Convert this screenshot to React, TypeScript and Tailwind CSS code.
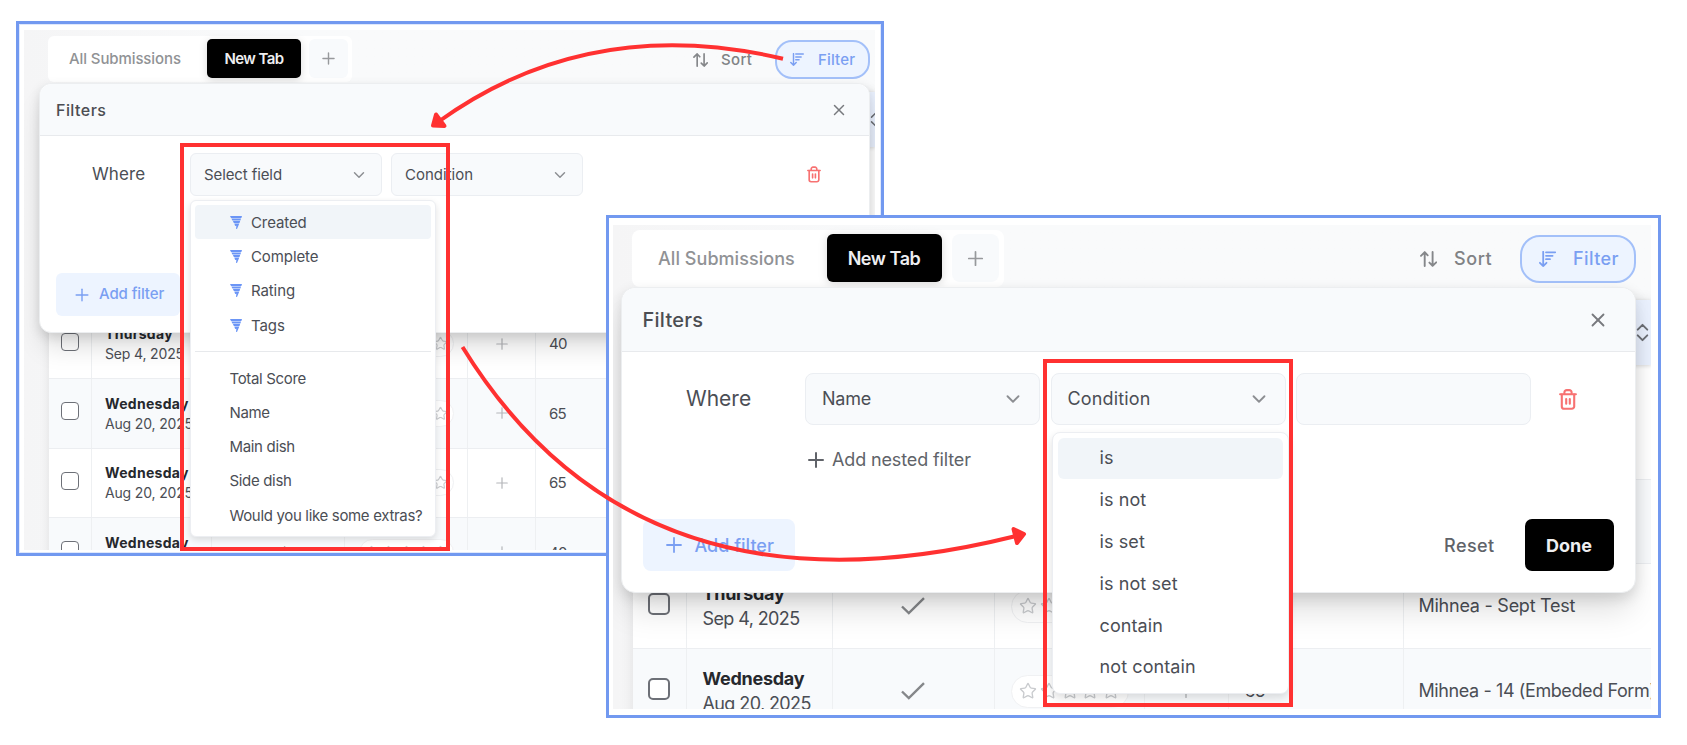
import { Check, ChevronDown, ChevronsUpDown, Plus, Star, X } from "lucide-react"

const fields = ["Created", "Complete", "Rating", "Tags"]
const questions = ["Total Score", "Name", "Main dish", "Side dish", "Would you like some extras?"]
const conditions = ["is", "is not", "is set", "is not set", "contain", "not contain"]

const smallRows = [
  { day: "Thursday", date: "Sep 4, 2025", score: "40" },
  { day: "Wednesday", date: "Aug 20, 2025", score: "65" },
  { day: "Wednesday", date: "Aug 20, 2025", score: "65" },
  { day: "Wednesday", date: "Aug 20, 2025", score: "40" },
]

const largeRows = [
  { day: "Thursday", date: "Sep 4, 2025", score: "40", form: "Mihnea - Sept Test" },
  { day: "Wednesday", date: "Aug 20, 2025", score: "65", form: "Mihnea - 14 (Embeded Form)" },
]

function SortIcon({ className }: { className: string }) {
  return (
    <svg viewBox="0 0 17 16" fill="none" stroke="currentColor" strokeWidth="1.9" strokeLinecap="round" strokeLinejoin="round" className={className}>
      <path d="M4.7 15V1.2M1 4.8l3.7-3.7 3 3.2" />
      <path d="M12.6 1v13.8M9.4 11.6l3.2 3.3 3.6-3.6" />
    </svg>
  )
}

function FilterIcon({ className }: { className: string }) {
  return (
    <svg viewBox="0 0 17 16" fill="none" stroke="currentColor" strokeWidth="1.8" strokeLinecap="round" strokeLinejoin="round" className={className}>
      <path d="M4.2.8v14.2M.9 11.8l3.3 3.3 3.3-3.3" />
      <path d="M7 1.3h9.2M7 4.8h6.6M7 8.2h4" />
    </svg>
  )
}

function TrashIcon({ className }: { className: string }) {
  return (
    <svg viewBox="0 0 18 21" fill="none" stroke="currentColor" strokeWidth="2.1" strokeLinecap="round" strokeLinejoin="round" className={className}>
      <path d="M1.1 5.3h15.8M5.4 5V3.4A2.3 2.3 0 0 1 7.7 1.1h2.6a2.3 2.3 0 0 1 2.3 2.3V5" />
      <path d="M2.8 5.6v11.8a2.4 2.4 0 0 0 2.4 2.4h7.6a2.4 2.4 0 0 0 2.4-2.4V5.6" />
      <path d="M7.2 10v4.800M10.800 10v4.800" />
    </svg>
  )
}

function FieldIcon() {
  return (
    <svg viewBox="0 0 12 13" className="h-[13px] w-3 text-[#6b95f6]" fill="currentColor">
      <path d="M0 0h12l-.6 1.9H1z" />
      <path d="M1.400 2.500h9.600l-.6 1.900H2.400z" />
      <path d="M2.900 5h7.200l-.6 1.900H3.800z" />
      <path d="M4.300 7.500h5L7 13l-1-.3.4-2.900-1.300.1z" />
    </svg>
  )
}

function Stars({ large }: { large?: boolean }) {
  return (
    <div
      className={
        large
          ? "flex h-[33px] w-[118px] items-center justify-center gap-[2.8px] rounded-full border border-[#f0f1f3] bg-white"
          : "flex h-[27px] w-[95px] items-center justify-center gap-[2.3px] rounded-full border border-[#f0f1f3] bg-white"
      }
    >
      {[1, 2, 3, 4, 5].map((n) => (
        <Star key={n} className={large ? "size-[18px] text-[#c9cbce]" : "size-[15px] text-[#c9cbce]"} strokeWidth={1.8} />
      ))}
    </div>
  )
}

function SmallWindow() {
  return (
    <div className="absolute left-4 top-[21px] h-[535px] w-[868px] border-[3px] border-[#7299f0] bg-white pl-[5px] pt-1.5 shadow-[inset_0_0_0_1px_#dfe8fc]">
      <div className="relative h-[520px] w-[851px] overflow-hidden bg-linear-to-r from-[#f5f5f6] to-[#f9fafb] to-30%">
        {/* Tabs */}
        <div className="flex items-start justify-between pl-6 pr-[5px] pt-1.5">
          <div className="flex h-[46px] w-[304px] items-center rounded-md bg-white pb-[1px]">
            <span className="w-[159px] pl-[21px] pt-0.5 text-[15px] font-medium tracking-[-0.1px] text-[#909295]">All Submissions</span>
            <span className="flex h-[39px] w-[94px] items-center justify-center rounded-[5px] bg-black pt-0.5 text-[15px] font-semibold tracking-[-0.6px] text-[#eeeef0] shadow-[0_2px_8px_rgba(0,0,0,0.15)]">
              New Tab
            </span>
            <span className="ml-2 flex h-[39px] w-[39px] items-center justify-center rounded-md bg-[#f8fafc]">
              <Plus className="size-[19px] text-[#97999c]" strokeWidth={1.8} />
            </span>
          </div>
          <div className="mt-1 flex h-[39px] items-center">
            <SortIcon className="h-3.5 w-[15px] text-[#85878a]" />
            <span className="ml-[13px] w-[54px] pt-px text-[15px] font-medium tracking-[0.35px] text-[#808285]">Sort</span>
            <span className="flex h-[39px] w-[95px] items-center rounded-[17px] border-2 border-[#a3c0f9] bg-[#edf4ff] pl-[13px] text-[#7a9ff2]">
              <FilterIcon className="h-[13px] w-3.5" />
              <span className="ml-[14px] pt-px text-[15px] font-medium tracking-[0.15px]">Filter</span>
            </span>
          </div>
        </div>

        {/* Submissions table */}
        <div className="ml-[24.5px] mt-[10px] bg-white shadow-[0_0_10px_rgba(0,0,0,0.09)]">
          <div className="flex h-[55px] items-center justify-end bg-[#e9f0fd] shadow-[0_1px_4px_rgba(0,0,0,0.15)]">
            <ChevronsUpDown className="-mr-[10px] size-[19px] text-[#6c6f75]" strokeWidth={1.8} />
          </div>
          <div className="h-[162.5px]" />
          {smallRows.map((row, i) => (
            <div
              key={i}
              className={`flex h-[69.5px] border-b border-[#eceef1] text-[#4b4e55] ${i % 2 ? "bg-[#f8fafc]" : "bg-white"}`}
            >
              <div className="flex w-[43.5px] items-center justify-center border-r border-[#eef0f2] pb-1">
                <span className="size-[18px] rounded-[4px] border-[1.5px] border-[#6d7077] bg-white" />
              </div>
              <div className="flex w-[120px] flex-col justify-center border-r border-[#eef0f2] pl-[13px] pt-px leading-[21px]">
                <span className="text-sm font-bold tracking-[0.3px] text-[#26282d]">{row.day}</span>
                <span className="whitespace-nowrap text-sm tracking-[-0.16px]">{row.date}</span>
              </div>
              <div className="flex w-[133px] items-center justify-center border-r border-[#eef0f2]">
                <Check className="size-5 text-[#8c8e92]" strokeWidth={1.8} />
              </div>
              <div className="flex w-[123px] items-center justify-center border-r border-[#eef0f2]">
                <Stars />
              </div>
              <div className="flex w-[68px] items-center justify-center border-r border-[#eef0f2]">
                <Plus className="size-[18px] text-[#b4b6b9]" strokeWidth={1.6} />
              </div>
              <div className="flex items-center pl-[13px] pt-px text-[15px] tracking-[-0.8px]">{row.score}</div>
            </div>
          ))}
        </div>

        {/* Filters panel */}
        <div className="absolute left-[15px] top-[53px] h-[250px] w-[831px] rounded-xl border border-[#eceef0] bg-white shadow-[0_18px_26px_-4px_rgba(0,0,0,0.13),0_4px_12px_rgba(0,0,0,0.12)]">
          <div className="flex h-[52px] items-center justify-between rounded-t-xl border-b border-[#e8eaed] bg-[#f8fafc] pl-4 pr-[21px]">
            <span className="text-base font-medium tracking-[0.45px] text-[#4b4d52]">Filters</span>
            <X className="size-[18px] text-[#77797d]" strokeWidth={2} />
          </div>
          <div className="mt-[17px] flex h-[43px] items-center pl-[52px] text-[#4b4e55]">
            <span className="w-[98px] text-[17px] tracking-[0.1px]">Where</span>
            <span className="flex h-[43px] w-[192px] items-center justify-between rounded-md border border-[#ebeef2] bg-[#f8fafc] pl-[13px] pr-[13px]">
              <span className="pt-0.5 text-[15px] tracking-[-0.1px]">Select field</span>
              <ChevronDown className="size-[18px] text-[#8c8e92]" strokeWidth={1.9} />
            </span>
            <span className="ml-[9px] flex h-[43px] w-[192px] items-center justify-between rounded-md border border-[#ebeef2] bg-[#f8fafc] pl-[13px] pr-[13px]">
              <span className="pt-0.5 text-[15px]">Condition</span>
              <ChevronDown className="size-[18px] text-[#8c8e92]" strokeWidth={1.9} />
            </span>
            <TrashIcon className="ml-[224px] h-[17px] w-[14px] text-[#f77272]" />
          </div>
          <div className="ml-4 mt-[77px] flex h-[43px] w-[124px] items-center rounded-md bg-[#edf4ff] pl-[16px] text-[#7a9ff2]">
            <Plus className="size-[20px]" strokeWidth={1.7} />
            <span className="ml-[7px] text-[15px] font-medium tracking-[-0.1px]">Add filter</span>
          </div>
        </div>

        {/* Field dropdown */}
        <div className="absolute left-[166px] top-[170px] h-[337px] w-[246px] rounded-md border border-[#eceef2] bg-white pl-1 pr-[4px] pt-1 text-[15px] text-[#4b4e55] shadow-[0_3px_7px_rgba(0,0,0,0.12)]">
          {fields.map((field, i) => (
            <div key={field} className={`flex h-[34.3px] items-center gap-[9px] rounded-[4px] pl-[35px] ${i === 0 ? "bg-[#f1f5f9]" : ""}`}>
              <FieldIcon />
              <span className="pt-0.5 tracking-[-0.1px]">{field}</span>
            </div>
          ))}
          <div className="mb-[9px] mt-[9px] h-px bg-[#e7e9ec]" />
          {questions.map((question) => (
            <div key={question} className="flex h-[34.3px] items-center whitespace-nowrap pl-[34.5px] pt-px tracking-[-0.33px]">
              {question}
            </div>
          ))}
        </div>
      </div>
    </div>
  )
}

function LargeWindow() {
  return (
    <div className="absolute left-[606px] top-[215px] h-[503px] w-[1055px] border-[3px] border-[#7299f0] bg-white pl-[4px] pt-[7px]">
      <div className="relative h-[484px] w-[1038px] overflow-hidden bg-linear-to-r from-[#f5f5f6] to-[#f9fafb] to-30%">
        {/* Tabs */}
        <div className="flex items-start justify-between pl-[19px] pr-[15px] pt-[5px]">
          <div className="flex h-[57px] w-[372px] items-center rounded-lg bg-white pb-px">
            <span className="w-[194.5px] pl-[26px] pt-px text-[18px] font-medium tracking-[0.05px] text-[#909295]">All Submissions</span>
            <span className="flex h-[48px] w-[115px] items-center justify-center rounded-md bg-black pt-px text-[18px] font-semibold tracking-[-0.45px] text-[#eeeef0] shadow-[0_2px_10px_rgba(0,0,0,0.15)]">
              New Tab
            </span>
            <span className="ml-2.5 flex h-[48px] w-[47px] items-center justify-center rounded-lg bg-[#f8fafc]">
              <Plus className="size-[23px] text-[#97999c]" strokeWidth={1.8} />
            </span>
          </div>
          <div className="mt-[4.5px] flex h-[48px] items-center">
            <SortIcon className="h-4 w-[17px] text-[#85878a]" />
            <span className="ml-[17px] w-[66px] text-[18px] font-medium tracking-[0.6px] text-[#808285]">Sort</span>
            <span className="flex h-[48px] w-[116px] items-center rounded-[20px] border-2 border-[#a3c0f9] bg-[#edf4ff] pl-[17px] text-[#7a9ff2]">
              <FilterIcon className="h-4 w-[17px]" />
              <span className="ml-[17px] text-[18px] font-medium tracking-[0.4px]">Filter</span>
            </span>
          </div>
        </div>

        {/* Submissions table */}
        <div className="ml-5 mt-[12.5px] bg-white shadow-[0_0_12px_rgba(0,0,0,0.09)]">
          <div className="flex h-[65px] items-center justify-end bg-[#e9f0fd] shadow-[0_1px_4px_rgba(0,0,0,0.15)]">
            <ChevronsUpDown className="-mr-[2.5px] size-[23px] text-[#6c6f75]" strokeWidth={2} />
          </div>
          <div className="h-[115px] border-b border-[#eceef1]" />
          <div className="h-[84.5px] border-b border-[#eceef1] bg-[#f8fafc]" />
          {largeRows.map((row, i) => (
            <div
              key={row.form}
              className={`flex h-[85px] border-b border-[#eceef1] text-lg text-[#4b4e55] ${i % 2 ? "bg-[#f8fafc]" : "bg-white"}`}
            >
              <div className="flex w-[53.5px] shrink-0 items-center justify-center border-r border-[#eef0f2] pb-[5px]">
                <span className="size-[22px] rounded-[5px] border-2 border-[#6d7077] bg-white" />
              </div>
              <div className="flex w-[146px] shrink-0 flex-col justify-center border-r border-[#eef0f2] pl-[16px] leading-[25.5px]">
                <span className="font-bold tracking-[-0.27px] text-[#26282d]">{row.day}</span>
                <span className="whitespace-nowrap tracking-[-0.6px]">{row.date}</span>
              </div>
              <div className="flex w-[162px] shrink-0 items-center justify-center border-r border-[#eef0f2]">
                <svg viewBox="0 0 24 18" fill="none" stroke="currentColor" strokeWidth="2.4" className="h-[18px] w-6 text-[#85878a]">
                  <path d="M1 9.5l6.8 6.5L23 1.2" />
                </svg>
              </div>
              <div className="flex w-[150px] shrink-0 items-center justify-center border-r border-[#eef0f2] pl-px">
                <Stars large />
              </div>
              <div className="flex w-[84px] shrink-0 items-center justify-center border-r border-[#eef0f2]">
                <Plus className="size-[22px] text-[#b4b6b9]" strokeWidth={1.5} />
              </div>
              <div className="flex w-[175px] shrink-0 items-center border-r border-[#eef0f2] pl-[16px] tracking-[-0.8px]">{row.score}</div>
              <div className={`flex shrink-0 items-center whitespace-nowrap pl-[15px] ${i === 0 ? "tracking-[-0.25px]" : "tracking-[-0.4px]"}`}>
                {row.form}
              </div>
            </div>
          ))}
        </div>

        {/* Filters panel */}
        <div className="absolute left-[8px] top-[62px] h-[306px] w-[1015px] rounded-[14px] border border-[#eceef0] bg-white shadow-[0_22px_32px_-5px_rgba(0,0,0,0.13),0_5px_14px_rgba(0,0,0,0.12)]">
          <div className="flex h-[64px] items-center justify-between rounded-t-[14px] border-b border-[#e8eaed] bg-[#f8fafc] pl-[20.5px] pr-[26px]">
            <span className="text-xl font-medium tracking-[0.25px] text-[#4b4d52]">Filters</span>
            <X className="size-[22px] text-[#77797d]" strokeWidth={2} />
          </div>
          <div className="mt-[21px] flex h-[52px] items-center pl-[64px] text-lg text-[#4b4e55]">
            <span className="w-[119px] text-[21px] tracking-[0px]">Where</span>
            <span className="flex h-[52px] w-[235px] items-center justify-between rounded-lg border-[1.5px] border-[#ebeef2] bg-[#f8fafc] pl-4 pr-[15px]">
              <span className="tracking-[-0.2px]">Name</span>
              <ChevronDown className="size-[22px] text-[#8c8e92]" strokeWidth={2} />
            </span>
            <span className="ml-[10.5px] flex h-[52px] w-[235px] items-center justify-between rounded-lg border-[1.5px] border-[#ebeef2] bg-[#f8fafc] pl-4 pr-[15px]">
              <span className="tracking-[0.15px]">Condition</span>
              <ChevronDown className="size-[22px] text-[#8c8e92]" strokeWidth={2} />
            </span>
            <span className="ml-[10.5px] h-[52px] w-[235px] rounded-lg border-[1.5px] border-[#ebeef2] bg-[#f8fafc]" />
            <TrashIcon className="ml-[27.500px] h-[21px] w-[18px] text-[#f77272]" />
          </div>
          <div className="ml-[182px] mt-[21px] flex h-[27px] items-center text-lg text-[#606369]">
            <Plus className="size-6" strokeWidth={2} />
            <span className="ml-[4px] tracking-[-0.13px]">Add nested filter</span>
          </div>
          <div className="mt-[46px] flex h-[52px] items-center pl-[20.5px] pr-[21.5px] text-lg">
            <span className="flex h-[52px] w-[152px] items-center rounded-lg bg-[#edf4ff] pl-[19px] font-medium text-[#7a9ff2]">
              <Plus className="size-6" strokeWidth={1.8} />
              <span className="ml-[9px] pt-px">Add filter</span>
            </span>
            <span className="ml-auto pt-px font-medium tracking-[0.4px] text-[#606369]">Reset</span>
            <span className="ml-[30px] flex h-[52px] w-[89px] items-center justify-center rounded-[7px] bg-black pt-px font-bold text-[#eeeef0]">
              Done
            </span>
          </div>
        </div>

        {/* Condition dropdown */}
        <div className="absolute left-[438.5px] top-[206.5px] h-[262px] w-[237px] rounded-lg border-[1.5px] border-[#eceef2] bg-white px-[5px] pt-[5px] text-lg text-[#4b4e55] shadow-[0_4px_9px_rgba(0,0,0,0.13)]">
          {conditions.map((condition, i) => (
            <div key={condition} className={`flex h-[41.8px] items-center rounded-md pl-[42px] tracking-[0.1px] ${i === 0 ? "bg-[#f1f5f9]" : ""}`}>
              {condition}
            </div>
          ))}
        </div>
      </div>
    </div>
  )
}

export default function App() {
  return (
    <main className="relative h-[745px] w-[1687px] overflow-hidden bg-white font-['Inter',sans-serif]">
      <SmallWindow />
      <LargeWindow />

      {/* Highlights and arrows */}
      <div className="absolute left-[180px] top-[143px] h-[408px] w-[270px] border-4 border-[#ff3131]" />
      <div className="absolute left-[1042.5px] top-[359px] h-[347.5px] w-[250.5px] border-4 border-[#ff3131]" />
      <svg className="absolute inset-0" width="1687" height="745" fill="none" stroke="#ff3131" strokeWidth="4">
        <path d="M783 58.7Q589 13 438 122" />
        <path d="M433 125.500l3-11 8.500 11.500z" fill="#ff3131" strokeLinejoin="round" />
        <path d="M462.500 347Q637 630 1014 536.500" />
        <path d="M1024 534l-10.500-5 3.500 14z" fill="#ff3131" strokeLinejoin="round" />
      </svg>
    </main>
  )
}
